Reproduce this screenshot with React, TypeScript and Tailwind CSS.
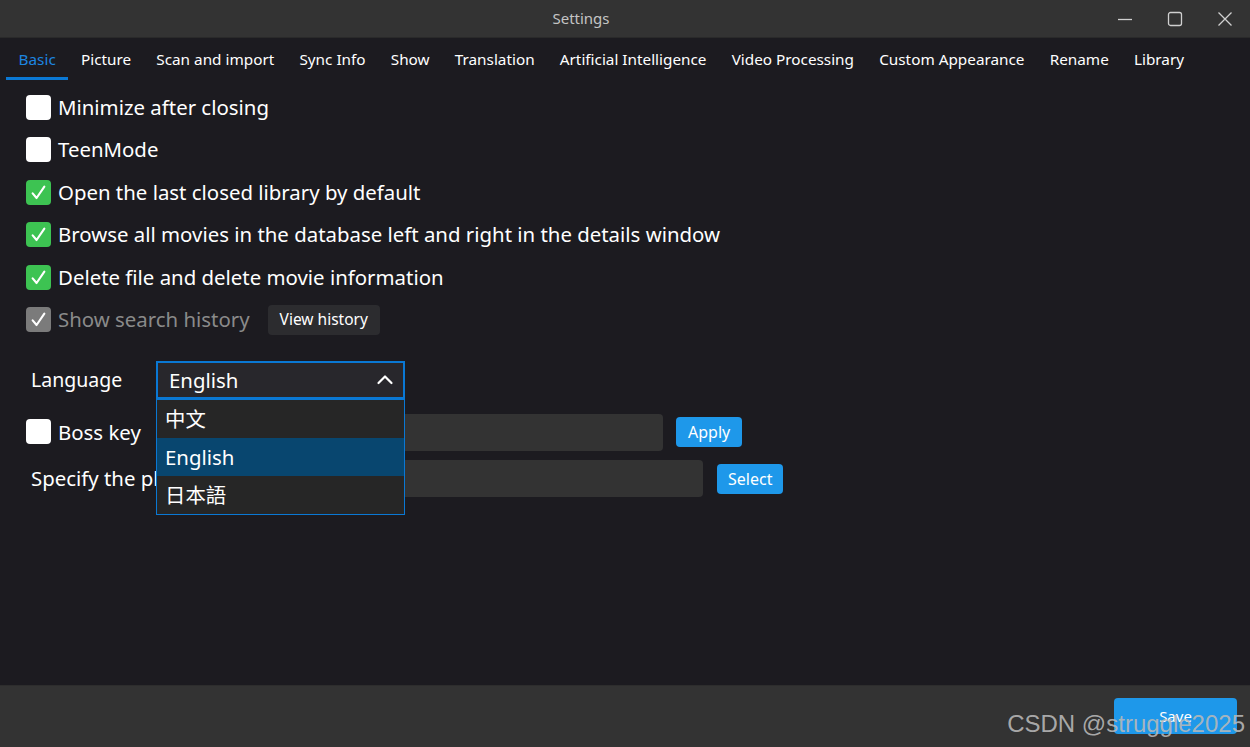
import { useState } from "react";

const tabs = [
  "Basic",
  "Picture",
  "Scan and import",
  "Sync Info",
  "Show",
  "Translation",
  "Artificial Intelligence",
  "Video Processing",
  "Custom Appearance",
  "Rename",
  "Library",
];

const options = [
  { label: "Minimize after closing", checked: false },
  { label: "TeenMode", checked: false },
  { label: "Open the last closed library by default", checked: true },
  { label: "Browse all movies in the database left and right in the details window", checked: true },
  { label: "Delete file and delete movie information", checked: true },
];

function CheckBox({ checked, disabled }: { checked: boolean; disabled?: boolean }) {
  const bg = disabled ? "bg-[#7b7b7b]" : checked ? "bg-[#3dc352]" : "bg-white";
  return (
    <span className={`flex h-[25px] w-[25px] shrink-0 items-center justify-center rounded-[4px] ${bg}`}>
      {checked && (
        <svg width="17" height="17" viewBox="0 0 16 16" fill="none">
          <path d="M2.5 8.8 L6.2 13.2 L13.5 2.5" stroke="white" strokeWidth="2" strokeLinecap="round" strokeLinejoin="round" />
        </svg>
      )}
    </span>
  );
}

export default function App() {
  const [active] = useState(0);
  const languages = ["中文", "English", "日本語"];

  return (
    <div
      className="relative flex h-[747px] w-[1250px] flex-col overflow-hidden bg-[#1c1b20] text-white"
      style={{ fontFamily: '"Noto Sans", "Noto Sans CJK SC", sans-serif' }}
    >
      {/* title bar */}
      <div className="relative flex h-[38px] shrink-0 items-center justify-center border-b border-[#2a2a2a] bg-[#333333] pr-[88px]">
        <span className="text-[15px] text-[#c4c4c4]">Settings</span>
        <div className="absolute right-0 top-0 flex h-[37px] items-center">
          <button className="flex h-[37px] w-[50px] items-center justify-center">
            <svg width="16" height="16" viewBox="0 0 16 16">
              <path d="M1 8.5 H15" stroke="#d0d0d0" strokeWidth="1.3" />
            </svg>
          </button>
          <button className="flex h-[37px] w-[50px] items-center justify-center">
            <svg width="16" height="16" viewBox="0 0 16 16" fill="none">
              <rect x="1.5" y="1.5" width="13" height="13" rx="2" stroke="#d0d0d0" strokeWidth="1.3" />
            </svg>
          </button>
          <button className="flex h-[37px] w-[50px] items-center justify-center">
            <svg width="16" height="16" viewBox="0 0 16 16" fill="none">
              <path d="M1.5 1.5 L14.5 14.5 M14.5 1.5 L1.5 14.5" stroke="#d0d0d0" strokeWidth="1.3" />
            </svg>
          </button>
        </div>
      </div>

      {/* tabs */}
      <div className="flex h-[42px] shrink-0 items-stretch pl-[6px]">
        {tabs.map((t, i) => (
          <div
            key={t}
            className={`flex items-center border-b-[3px] px-[12.6px] pt-[4px] text-[15.3px] ${
              i === active ? "border-[#0a78d4] text-[#1c86e0]" : "border-transparent text-white"
            }`}
          >
            {t}
          </div>
        ))}
      </div>

      {/* content */}
      <div className="flex flex-1 flex-col pl-[26px] pt-[6px] text-[20.4px]">
        {options.map((o) => (
          <div key={o.label} className="flex h-[42.5px] items-center gap-[7px]">
            <CheckBox checked={o.checked} />
            <span>{o.label}</span>
          </div>
        ))}
        <div className="flex h-[42.5px] items-center gap-[7px]">
          <CheckBox checked disabled />
          <span className="text-[#8a8a8a]">Show search history</span>
          <button className="ml-[11px] h-[30px] rounded-[4px] bg-[#2c2c2f] px-[12px] text-[15.5px] text-white">
            View history
          </button>
        </div>

        <div className="mt-[20px] flex h-[38px] items-center">
          <span className="w-[130px] pl-[5px] text-[19.5px]">Language</span>
          <div className="relative">
            <div className="flex h-[38px] w-[249px] items-center justify-between border-2 border-[#0a78d4] bg-[#28272c] pl-[11px] pr-[9px]">
              <span>English</span>
              <svg width="18" height="18" viewBox="0 0 18 18" fill="none">
                <path d="M2.5 12 L9 5.5 L15.5 12" stroke="white" strokeWidth="2.2" strokeLinecap="round" strokeLinejoin="round" />
              </svg>
            </div>
            <div className="absolute left-0 top-[38px] z-10 flex w-[249px] flex-col border border-[#0a78d4] bg-[#262626]">
              {languages.map((l) => (
                <div
                  key={l}
                  className={`flex h-[38px] items-center pl-[8px] ${l === "English" ? "bg-[#08466f]" : ""}`}
                >
                  {l}
                </div>
              ))}
            </div>
          </div>
        </div>

        <div className="mt-[14px] flex h-[38px] items-center">
          <div className="flex w-[130px] items-center gap-[7px]">
            <CheckBox checked={false} />
            <span>Boss key</span>
          </div>
          <div className="h-[37px] w-[507px] rounded-[4px] bg-[#333333]" />
          <button className="ml-[13px] h-[30px] rounded-[4px] bg-[#1e98ea] px-[12px] text-[16px] text-white">
            Apply
          </button>
        </div>

        <div className="mt-[9px] flex h-[37px] items-center">
          <span className="w-[180px] pl-[5px]">Specify the player</span>
          <div className="h-[37px] w-[497px] rounded-[4px] bg-[#333333]" />
          <button className="ml-[14px] h-[30px] rounded-[4px] bg-[#1e98ea] px-[11px] text-[16px] text-white">
            Select
          </button>
        </div>
      </div>

      {/* footer */}
      <div className="relative flex h-[62px] shrink-0 items-start justify-end border-t border-[#2d2d2d] bg-[#333333] pr-[13px] pt-[12px]">
        <button className="h-[36px] w-[123px] rounded-[4px] bg-[#1e98ea] text-[15px] text-white">Save</button>
        <span
          className="pointer-events-none absolute bottom-[5px] right-[5px] text-[24px] text-[#b8b8b8]/90"
          style={{ fontFamily: '"Liberation Sans", Arial, sans-serif' }}
        >
          CSDN @struggle2025
        </span>
      </div>
    </div>
  );
}
